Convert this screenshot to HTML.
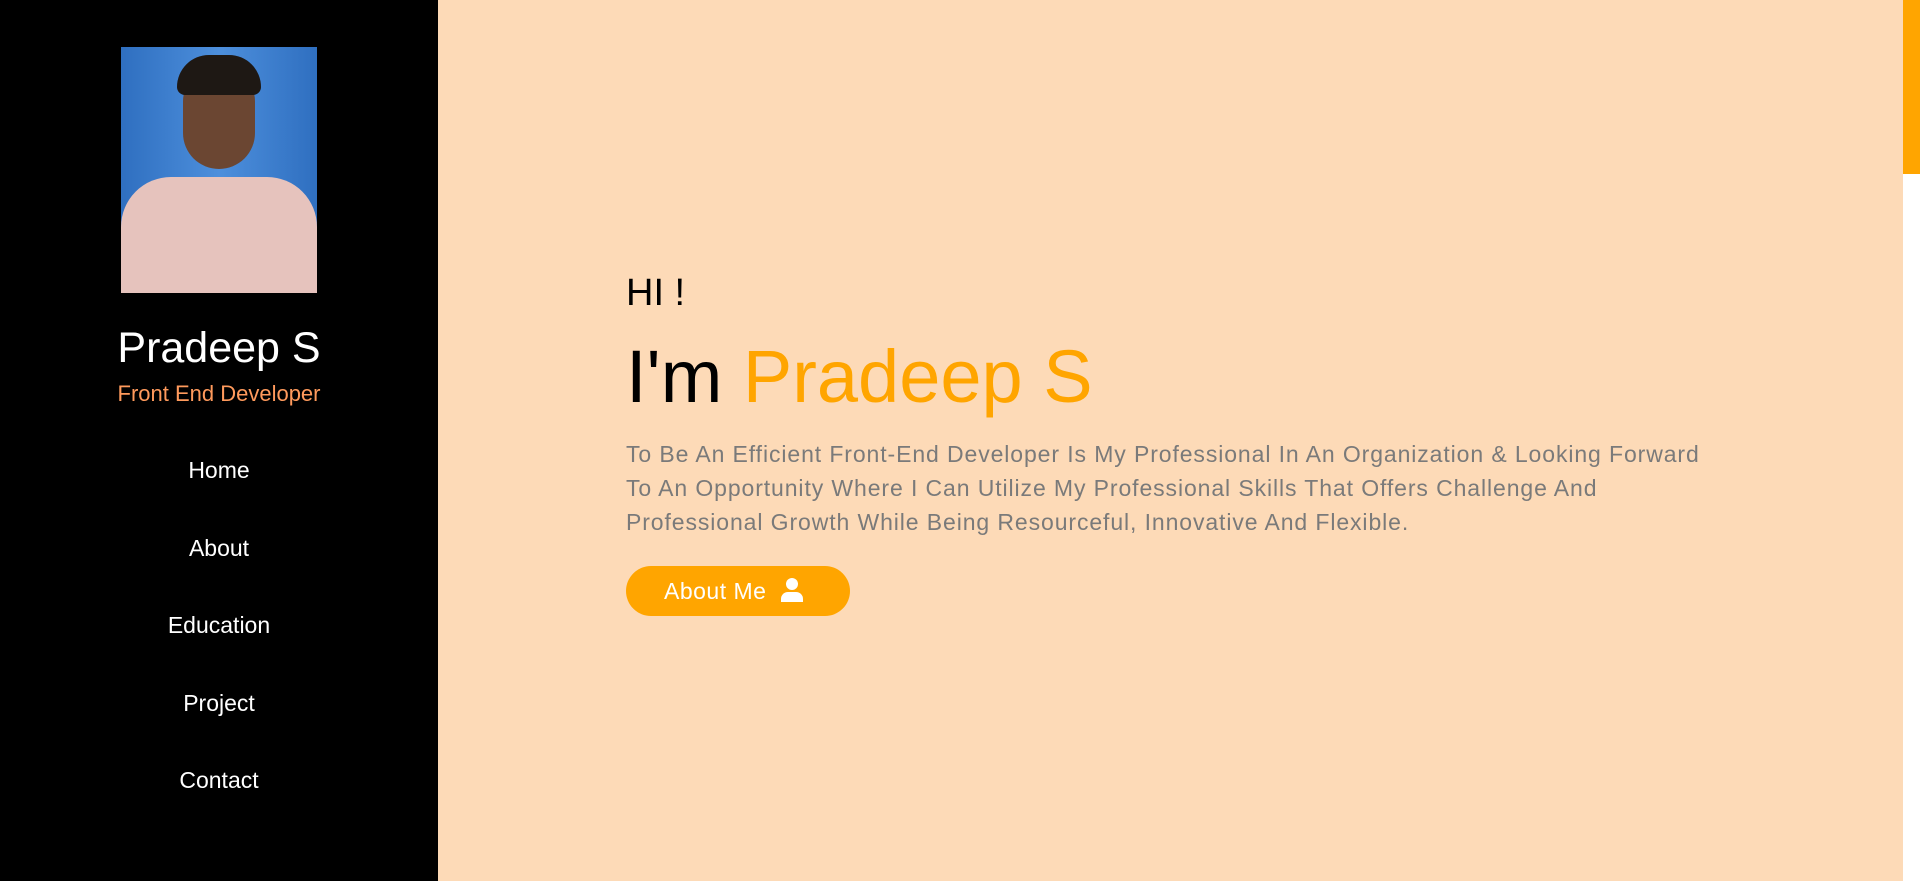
<!DOCTYPE html>
<html><head><style>
*{margin:0;padding:0;box-sizing:border-box}
body{width:1920px;height:881px;overflow:hidden;background:#fddab7;font-family:"Liberation Sans",sans-serif;position:relative}
.side{position:absolute;left:0;top:0;width:438px;height:881px;background:#000;text-align:center}
.photo{position:absolute;left:121px;top:47px;width:196px;height:246px;background:linear-gradient(90deg,#2f6fc0,#4d8fdc 50%,#2f6fc0);overflow:hidden}
.head{position:absolute;left:62px;top:22px;width:72px;height:100px;border-radius:36px 36px 40px 40px;background:#6b4632}
.hair{position:absolute;left:56px;top:8px;width:84px;height:40px;border-radius:40px 40px 10px 10px;background:#1e1814}
.shirt{position:absolute;left:0;top:130px;width:196px;height:130px;background:#e6c3bd;border-radius:50px 50px 0 0}
.name{position:absolute;left:0;width:438px;top:324px;color:#fff;font-size:43px}
.role{position:absolute;left:0;width:438px;top:381px;color:#ff9a5c;font-size:22px}
.nav{position:absolute;left:0;width:438px;color:#fff;font-size:23px}
.main{position:absolute;left:626px}
.scroll{position:absolute;right:0;top:0;width:17px;height:881px;background:#fff}
.thumb{position:absolute;right:0;top:0;width:17px;height:174px;background:#ffa500}
</style></head><body>
<div class="side">
<div class="photo"><div class="shirt"></div><div class="head"></div><div class="hair"></div></div>
<div class="name">Pradeep S</div>
<div class="role">Front End Developer</div>
<div class="nav" style="top:457px">Home</div>
<div class="nav" style="top:535px">About</div>
<div class="nav" style="top:612px">Education</div>
<div class="nav" style="top:690px">Project</div>
<div class="nav" style="top:767px">Contact</div>
</div>
<div class="main" style="top:272px;font-size:38px;color:#000">HI !</div>
<div class="main" style="top:334px;font-size:74px;color:#000">I'm <span style="color:#ffa500">Pradeep S</span></div>
<div class="main" style="top:437px;font-size:23px;letter-spacing:0.9px;line-height:34px;color:#7a7a7a;white-space:nowrap">To Be An Efficient Front-End Developer Is My Professional In An Organization &amp; Looking Forward<br>To An Opportunity Where I Can Utilize My Professional Skills That Offers Challenge And<br>Professional Growth While Being Resourceful, Innovative And Flexible.</div>
<div class="main" style="top:566px;width:224px;height:50px;border-radius:25px;background:#ffa500;color:#fff;font-size:23px;line-height:50px;padding-left:38px;letter-spacing:0.5px">About Me <svg width="22" height="24" viewBox="0 0 22 24" style="vertical-align:-3px;margin-left:8px"><circle cx="11" cy="6" r="6" fill="#fff"/><path d="M0 24v-3a7 7 0 0 1 7-7h8a7 7 0 0 1 7 7v3z" fill="#fff"/></svg></div>
<div class="scroll"><div class="thumb"></div></div>
</body></html>
